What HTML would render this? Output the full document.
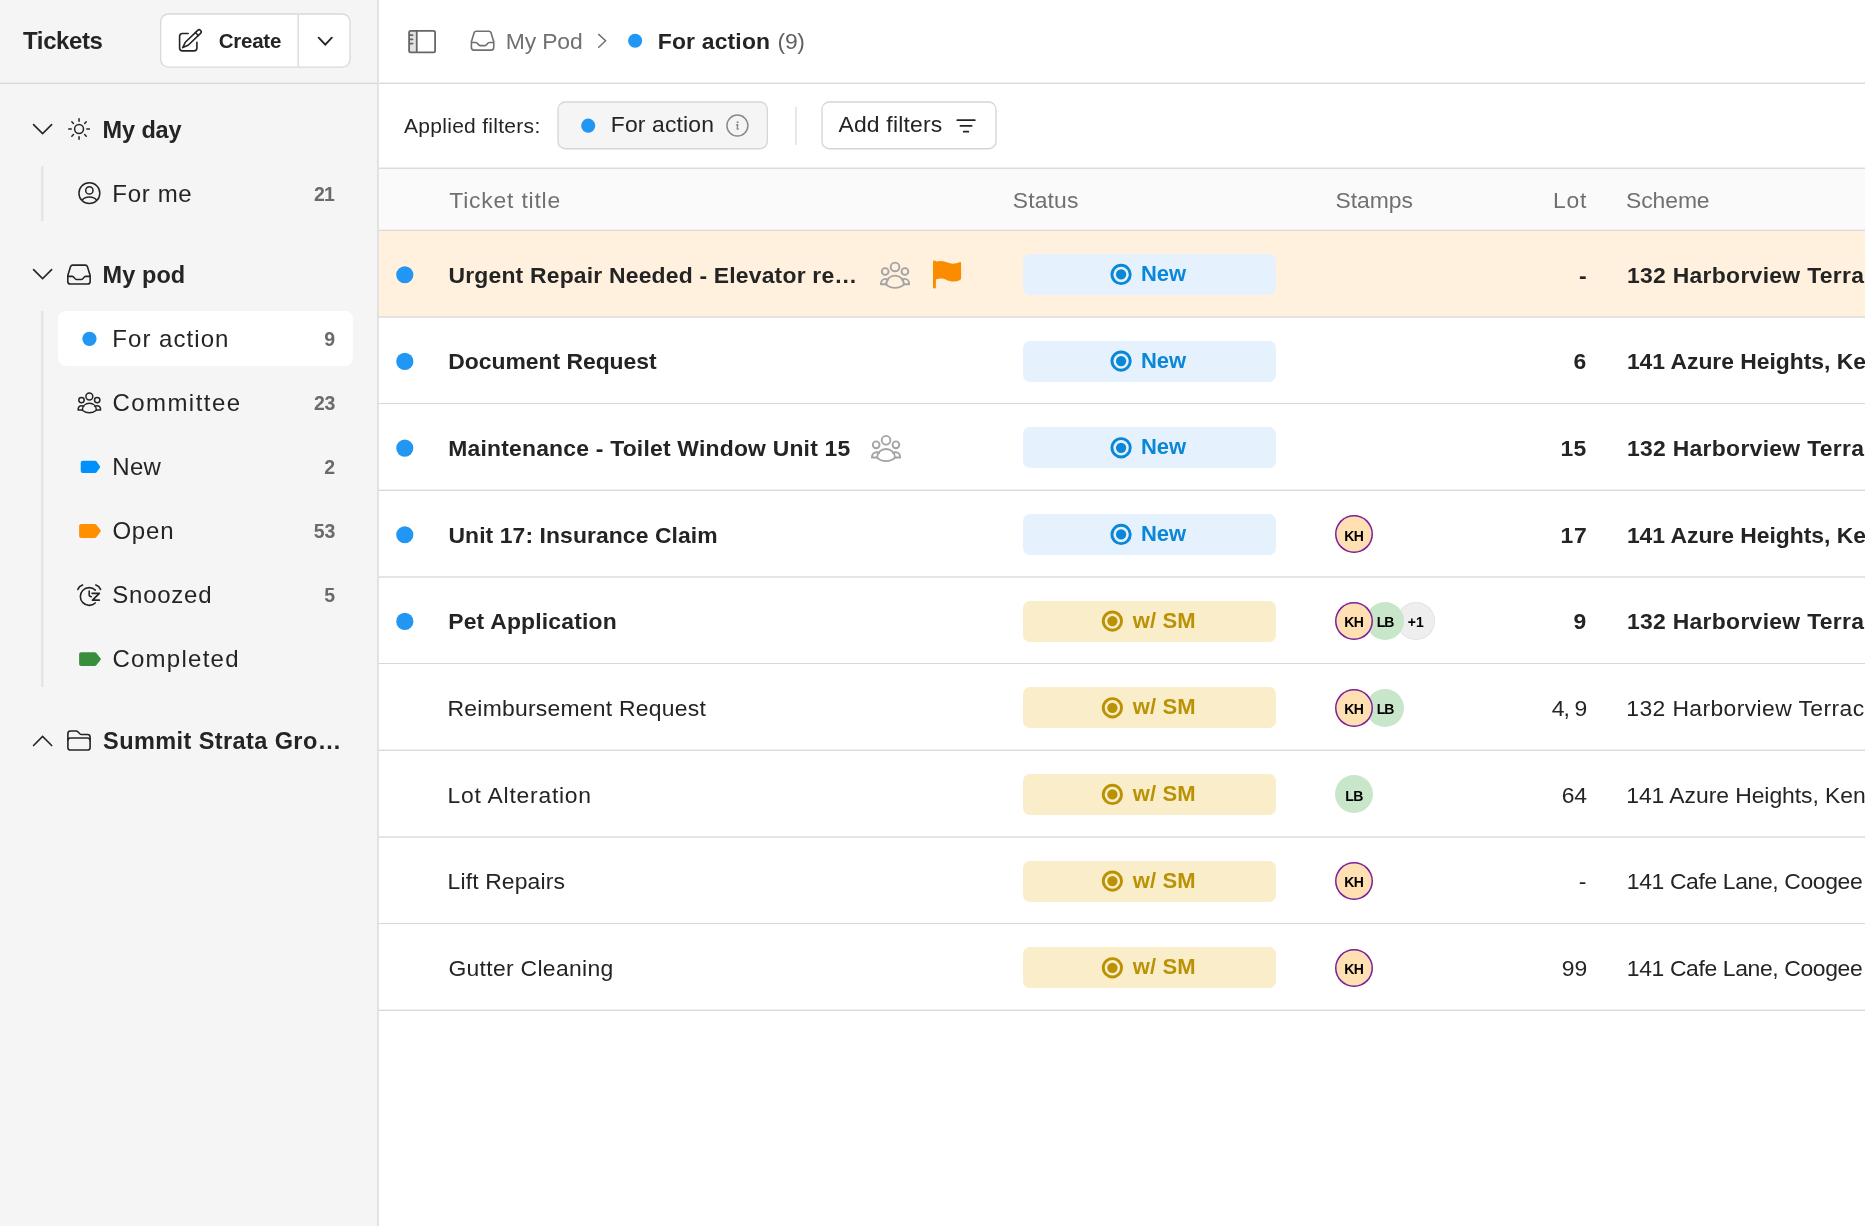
<!DOCTYPE html>
<html lang="en">
<head>
<meta charset="utf-8">
<title>Tickets - For action</title>
<style>
*{box-sizing:border-box;margin:0;padding:0}
html,body{width:1865px;height:1226px;overflow:hidden;background:#fff}
body{position:relative;font-family:"Liberation Sans",sans-serif;color:#242424}
aside,main,nav,header,div,svg,.t{position:absolute}
.t{white-space:nowrap;font-weight:400;display:block}
aside{left:0;top:0;width:377px;height:1226px;background:#f5f5f5}
aside:after{content:"";position:absolute;left:377px;top:0;width:2px;height:1226px;background:linear-gradient(90deg,#e0e0e0 50%,#e4e4e4 50%)}
main{left:0;top:0;width:1865px;height:1226px;overflow:hidden}
aside,main{will-change:transform}
.rail{background:linear-gradient(90deg,#e5e5e5 66.6%,#ececec 66.6%)}
.sel{background:#fff;border-radius:8px}
.thead{background:#fafafa}
.bdg{border-radius:7px}
.bdg.new{background:#e5f2fd}
.bdg.sm{background:#f9edca}
.av{border-radius:50%}
.av.kh{background:#ffe0b2;box-shadow:inset 0 0 0 1.5px #7b1fa2;z-index:3}
.av.lb{background:#c8e6c9;z-index:2}
.av.more{background:#eee;box-shadow:inset 0 0 0 1px #e4e4e4;z-index:1}
.ln{z-index:5}
</style>
</head>
<body>
<aside><div class="sbhead" style="left:0px;top:0px;width:377px;height:82px;"><h1 class="t" style="left:23.02px;top:29px;font-size:24px;line-height:24px;letter-spacing:-0.39px;font-weight:700;">Tickets</h1><div class="btn" style="left:160px;top:13px;width:191px;height:55px;"><svg class="ic bx" style="left:0px;top:0px" width="191" height="55" viewBox="160 13 191 55"><rect x="160.67" y="14" width="189.34" height="53.14" rx="7.83" fill="#fff" stroke="#d9d9d9" stroke-width="1.333"/></svg><div class="sep" style="left:137px;top:2px;width:2px;height:52px;background:linear-gradient(90deg,#ebebeb 50%,#dedede 50%)"></div><svg class="ic" style="left:16px;top:13px" width="29" height="28" viewBox="176 26 29 28"><g fill="none" stroke="#242424" stroke-width="1.6" stroke-linejoin="round" stroke-linecap="round"><path d="M188.2 33.55 H182.5 Q179.6 33.55 179.6 36.45 V47.95 Q179.6 50.85 182.5 50.85 H194 Q196.9 50.85 196.9 47.95 V42.3"/><g transform="translate(182.7 47.6) rotate(-43.8)"><path d="M0 0 L5.6 -2.05 H22.75 A2.05 2.05 0 0 1 22.75 2.05 H5.6 Z"/><path d="M19.6 -2.05 V2.05"/></g></g></svg><span class="t" style="left:58.70px;top:18px;font-size:20.5px;line-height:20.5px;letter-spacing:-0.24px;font-weight:700;">Create</span><svg class="ic" style="left:156px;top:22px" width="19" height="13" viewBox="316 35 19 13"><path d="M 318.67 37.66 L 325.25 44.55 L 331.83 37.66" fill="none" stroke="#242424" stroke-width="1.9" stroke-linecap="round" stroke-linejoin="miter"/></svg></div>
</div>
<div class="ln" style="left:0px;top:82px;width:377px;height:2px;background:linear-gradient(#ebebeb 50%,#d8d8d8 50%)"></div><nav class="nav" style="left:0px;top:84px;width:377px;height:1142px;"><svg class="ic" style="left:31px;top:38px" width="24" height="15" viewBox="31 122 24 15"><path d="M 33.56 124.56 L 42.6 133.52 L 51.64 124.56" fill="none" stroke="#242424" stroke-width="1.6" stroke-linecap="round" stroke-linejoin="miter"/></svg><svg class="ic" style="left:67px;top:33px" width="25" height="24" viewBox="67 117 25 24"><circle cx="79.05" cy="129" r="4.45" fill="none" stroke="#242424" stroke-width="1.5"/><path d="M86.85 129L89.35 129M84.64 134.59L86.26 136.21M79.05 136.8L79.05 139.3M73.46 134.59L71.84 136.21M71.25 129L68.75 129M73.46 123.41L71.84 121.79M79.05 121.2L79.05 118.7M84.64 123.41L86.26 121.79" stroke="#242424" stroke-width="1.5" stroke-linecap="round" fill="none"/></svg><span class="t sec" style="left:102.54px;top:35px;font-size:23.5px;line-height:23.5px;letter-spacing:-0.11px;font-weight:700;">My day</span><div class="rail" style="left:41px;top:82px;width:3px;height:55px;"></div><svg class="ic" style="left:77px;top:96px" width="25" height="26" viewBox="77 180 25 26"><g fill="none" stroke="#242424" stroke-width="1.5"><circle cx="89.38" cy="193.14" r="10.45"/><circle cx="89.38" cy="190.44" r="3.65"/><path d="M82.28 200.24 C84.78 196.04 93.98 196.04 96.48 200.24"/></g></svg><span class="t" style="left:112.31px;top:98px;font-size:24px;line-height:24px;letter-spacing:0.68px;">For me</span><span class="t cnt" style="left:313.95px;top:101px;font-size:19.5px;line-height:19.5px;letter-spacing:-0.88px;font-weight:700;color:#6a6a6a;">21</span><svg class="ic" style="left:31px;top:183px" width="24" height="15" viewBox="31 267 24 15"><path d="M 33.56 269.56 L 42.6 278.52 L 51.64 269.56" fill="none" stroke="#242424" stroke-width="1.6" stroke-linecap="round" stroke-linejoin="miter"/></svg><svg class="ic" style="left:65px;top:178px" width="28" height="25" viewBox="65 262 28 25"><g fill="none" stroke="#242424" stroke-width="1.6" stroke-linejoin="round"><path d="M72.7 265.1 H85.25 Q86.9 265.1 87.45 266.7 L90.15 275.6 V281.5 Q90.15 284.05 87.6 284.05 H70.35 Q67.8 284.05 67.8 281.5 V275.6 L70.5 266.7 Q71.05 265.1 72.7 265.1 Z"/><path d="M67.8 276.4 H72.2 C74.6 276.4 74.2 279.5 76.7 279.5 H81.25 C83.75 279.5 83.35 276.4 85.75 276.4 H90.15"/></g></svg><span class="t sec" style="left:102.54px;top:180px;font-size:23.5px;line-height:23.5px;letter-spacing:0.08px;font-weight:700;">My pod</span><div class="rail" style="left:41px;top:227px;width:3px;height:376px;"></div><div class="sel" style="left:58.2px;top:226.7px;width:294.6px;height:55.5px;"></div><svg class="ic dot" style="left:81px;top:246px" width="17" height="17" viewBox="81 330 17 17"><circle cx="89.45" cy="338.85" r="7.15" fill="#2196f3"/></svg><span class="t" style="left:112.31px;top:243px;font-size:24px;line-height:24px;letter-spacing:1.04px;">For action</span><span class="t cnt" style="left:324.20px;top:246px;font-size:19.5px;line-height:19.5px;font-weight:700;color:#6a6a6a;">9</span><svg class="ic" style="left:75px;top:306px" width="29" height="26" viewBox="75 390 29 26"><g fill="none" stroke="#242424" stroke-width="1.5" stroke-linejoin="round" stroke-linecap="round"><circle cx="89.35" cy="396.55" r="3.45"/><circle cx="81.5" cy="400.1" r="2.7"/><circle cx="97.2" cy="400.1" r="2.7"/><path d="M82.3 410.25 C82.3 405.95 85.4 403.35 89.35 403.35 S96.4 405.95 96.4 410.25 C94.5 411.95 92 412.75 89.35 412.75 S84.2 411.95 82.3 410.25 Z"/><path d="M82.5 409.95 H78.1 C78.1 407.55 79.7 405.85 81.7 405.85 C82.5 405.85 83.2 406.05 83.8 406.45"/><path d="M96.2 409.95 H100.6 C100.6 407.55 99 405.85 97 405.85 C96.2 405.85 95.5 406.05 94.9 406.45"/></g></svg><span class="t" style="left:112.42px;top:307px;font-size:24px;line-height:24px;letter-spacing:1.45px;">Committee</span><span class="t cnt" style="left:313.95px;top:310px;font-size:19.5px;line-height:19.5px;letter-spacing:-0.39px;font-weight:700;color:#6a6a6a;">23</span><svg class="ic" style="left:79px;top:375px" width="23" height="15" viewBox="79 459 23 15"><path d="M82.73 460.87 H95.1 Q96 460.87 96.6 461.57 L99.8 466.01 Q100.5 466.91 99.8 467.81 L96.6 472.25 Q96 472.95 95.1 472.95 H82.73 Q80.73 472.95 80.73 470.95 V462.87 Q80.73 460.87 82.73 460.87 Z" fill="#0091ff"/></svg><span class="t" style="left:112.31px;top:371px;font-size:24px;line-height:24px;letter-spacing:0.26px;">New</span><span class="t cnt" style="left:324.35px;top:374px;font-size:19.5px;line-height:19.5px;font-weight:700;color:#6a6a6a;">2</span><svg class="ic" style="left:78px;top:439px" width="24" height="16" viewBox="78 523 24 16"><path d="M81.1 524.05 H94.8 Q95.7 524.05 96.3 524.75 L100.46 530.07 Q101.16 530.97 100.46 531.87 L96.3 537.2 Q95.7 537.9 94.8 537.9 H81.1 Q79.1 537.9 79.1 535.9 V526.05 Q79.1 524.05 81.1 524.05 Z" fill="#ff8f00"/></svg><span class="t" style="left:112.42px;top:435px;font-size:24px;line-height:24px;letter-spacing:0.80px;">Open</span><span class="t cnt" style="left:313.84px;top:438px;font-size:19.5px;line-height:19.5px;letter-spacing:-0.29px;font-weight:700;color:#6a6a6a;">53</span><svg class="ic" style="left:75px;top:499px" width="28" height="25" viewBox="75 583 28 25"><g fill="none" stroke="#242424" stroke-width="1.6" stroke-linecap="round"><path d="M95.24 602.97 A8.85 8.85 0 1 1 95.35 590.13"/><path d="M89.2 591.1 V595.1 Q89.2 596.7 91.4 596.7"/><path d="M92.1 593.3 H99.3 L92.5 600.1 H99.3" stroke-width="1.8" stroke-linejoin="round"/><path d="M77.84 589.4 A7.5 7.5 0 0 1 82.5 584.9"/><path d="M95.9 584.9 A7.5 7.5 0 0 1 100.56 589.4"/></g></svg><span class="t" style="left:112.28px;top:499px;font-size:24px;line-height:24px;letter-spacing:0.76px;">Snoozed</span><span class="t cnt" style="left:324.20px;top:502px;font-size:19.5px;line-height:19.5px;font-weight:700;color:#6a6a6a;">5</span><svg class="ic" style="left:78px;top:567px" width="24" height="16" viewBox="78 651 24 16"><path d="M81.1 652.3 H94.8 Q95.7 652.3 96.3 653 L100.46 658.25 Q101.16 659.15 100.46 660.05 L96.3 665.3 Q95.7 666 94.8 666 H81.1 Q79.1 666 79.1 664 V654.3 Q79.1 652.3 81.1 652.3 Z" fill="#388e3c"/></svg><span class="t" style="left:112.42px;top:563px;font-size:24px;line-height:24px;letter-spacing:1.26px;">Completed</span><svg class="ic" style="left:31px;top:649px" width="24" height="16" viewBox="31 733 24 16"><path d="M 33.56 745.54 L 42.6 736.48 L 51.64 745.54" fill="none" stroke="#242424" stroke-width="1.6" stroke-linecap="round" stroke-linejoin="miter"/></svg><svg class="ic" style="left:65px;top:644px" width="28" height="25" viewBox="65 728 28 25"><g fill="none" stroke="#242424" stroke-width="1.6" stroke-linejoin="round"><path d="M67.9 747.4 V733.6 Q67.9 731 70.5 731 H76.2 Q77.1 731 77.8 731.7 L80.1 734 Q80.7 734.5 81.5 734.5 H87.5 Q90.1 734.5 90.1 737.1 V747.4 Q90.1 750.05 87.5 750.05 H70.5 Q67.9 750.05 67.9 747.4 Z"/><path d="M67.9 740.4 Q67.9 738 70.4 738 H87.6 Q90.1 738 90.1 740.4"/></g></svg><span class="t sec" style="left:103.07px;top:646px;font-size:23.5px;line-height:23.5px;letter-spacing:0.41px;font-weight:700;">Summit Strata Gro…</span></nav>
</aside>
<main><header class="crumbs" style="left:379px;top:0px;width:1486px;height:82px;"><svg class="ic" style="left:27px;top:27px" width="32" height="29" viewBox="406 27 32 29"><g fill="none" stroke="#666" stroke-width="1.8"><rect x="409.1" y="30.8" width="7.65" height="21.5" fill="#e2e2e2" stroke="none"/><rect x="409.1" y="30.8" width="26" height="21.5" rx="1.6"/><path d="M416.75 30.8 V52.3"/><path d="M409.8 35.1 H412.6 M409.8 39.35 H412.6 M409.8 43.6 H412.6" stroke-width="1.7" stroke-linecap="round"/></g></svg><svg class="ic" style="left:89px;top:28px" width="29" height="25" viewBox="468 28 29 25"><g fill="none" stroke="#707070" stroke-width="1.6" stroke-linejoin="round"><path d="M476.3 31.2 H488.85 Q490.5 31.2 491.05 32.8 L493.75 41.7 V47.6 Q493.75 50.15 491.2 50.15 H473.95 Q471.4 50.15 471.4 47.6 V41.7 L474.1 32.8 Q474.65 31.2 476.3 31.2 Z"/><path d="M471.4 42.5 H475.8 C478.2 42.5 477.8 45.6 480.3 45.6 H484.85 C487.35 45.6 486.95 42.5 489.35 42.5 H493.75"/></g></svg><span class="t" style="left:126.70px;top:30px;font-size:22.9px;line-height:22.9px;letter-spacing:-0.12px;color:#707070;">My Pod</span><svg class="ic" style="left:217px;top:31px" width="13" height="19" viewBox="596 31 13 19"><path d="M 598.73 34.42 L 605.57 40.8 L 598.73 47.18" fill="none" stroke="#707070" stroke-width="1.5" stroke-linecap="round" stroke-linejoin="miter"/></svg><svg class="ic dot" style="left:248px;top:32px" width="17" height="17" viewBox="627 32 17 17"><circle cx="635.15" cy="40.8" r="7.05" fill="#2196f3"/></svg><span class="t" style="left:278.77px;top:30px;font-size:22.9px;line-height:22.9px;letter-spacing:0.18px;font-weight:700;">For action</span><span class="t" style="left:398.58px;top:30px;font-size:22.9px;line-height:22.9px;letter-spacing:-0.30px;color:#616161;">(9)</span></header>
<div class="ln" style="left:379px;top:82px;width:1486px;height:2px;background:linear-gradient(#eeeeee 50%,#dcdcdc 50%)"></div><div class="filters" style="left:379px;top:84px;width:1486px;height:83px;"><span class="t" style="left:25.01px;top:31px;font-size:21px;line-height:21px;letter-spacing:0.29px;">Applied filters:</span><div class="chip" style="left:178px;top:17px;width:211px;height:49px;"><svg class="ic bx" style="left:0px;top:0px" width="211" height="49" viewBox="557 101 211 49"><rect x="558" y="102" width="209.34" height="46.74" rx="7.33" fill="#f5f5f5" stroke="#d6d6d6" stroke-width="1.333"/></svg><svg class="ic dot" style="left:23px;top:16px" width="17" height="17" viewBox="580 117 17 17"><circle cx="588.2" cy="125.65" r="7.05" fill="#2196f3"/></svg><span class="t" style="left:53.81px;top:12px;font-size:22.9px;line-height:22.9px;letter-spacing:0.15px;">For action</span><svg class="ic" style="left:167px;top:12px" width="26" height="26" viewBox="724 113 26 26"><circle cx="737.4" cy="125.6" r="10.5" fill="none" stroke="#8a8a8a" stroke-width="1.5"/><circle cx="737.6" cy="122.3" r="1.05" fill="#8a8a8a"/><path d="M736.5 125 L737.8 124.7 L737.1 129.2 L738.5 128.9" fill="none" stroke="#8a8a8a" stroke-width="1.3" stroke-linecap="round" stroke-linejoin="round"/></svg></div>
<div class="sep" style="left:416px;top:23px;width:2px;height:37.5px;background:linear-gradient(90deg,#e4e4e4 50%,#ececec 50%)"></div><div class="addf" style="left:442px;top:17px;width:176px;height:49px;"><svg class="ic bx" style="left:0px;top:0px" width="176" height="49" viewBox="821 101 176 49"><rect x="822" y="102" width="174.01" height="46.74" rx="7.33" fill="#fff" stroke="#d9d2dd" stroke-width="1.333"/></svg><span class="t" style="left:17.49px;top:12px;font-size:22.9px;line-height:22.9px;letter-spacing:0.19px;">Add filters</span><svg class="ic" style="left:133px;top:16px" width="24" height="18" viewBox="954 117 24 18"><path d="M957.25 120.15 H974.85 M960.45 125.9 H971.65 M963.75 131.65 H968.35" fill="none" stroke="#242424" stroke-width="1.7" stroke-linecap="round"/></svg></div>
</div>
<div class="ln" style="left:379px;top:167px;width:1486px;height:2px;background:linear-gradient(#eeeeee 50%,#dcdcdc 50%)"></div><div class="thead" style="left:379px;top:169px;width:1486px;height:61px;"><span class="t th" style="left:70.31px;top:20px;font-size:22.9px;line-height:22.9px;letter-spacing:0.79px;color:#707070;">Ticket title</span><span class="t th" style="left:633.73px;top:20px;font-size:22.9px;line-height:22.9px;letter-spacing:0.16px;color:#707070;">Status</span><span class="t th" style="left:956.44px;top:20px;font-size:22.9px;line-height:22.9px;letter-spacing:-0.01px;color:#707070;">Stamps</span><span class="t th" style="left:1174px;top:20px;font-size:22.9px;line-height:22.9px;letter-spacing:0.83px;color:#707070;">Lot</span><span class="t th" style="left:1247.08px;top:20px;font-size:22.9px;line-height:22.9px;letter-spacing:-0.09px;color:#707070;">Scheme</span></div>
<div class="ln" style="left:379px;top:229px;width:1486px;height:2px;background:linear-gradient(#efefef 50%,#dcdcdc 50%)"></div><div class="row" style="left:379px;top:231px;width:1486px;height:87px;background:#fff1de;"><svg class="ic dot" style="left:16px;top:34px" width="20" height="20" viewBox="395 265 20 20"><circle cx="404.8" cy="274.75" r="8.6" fill="#2196f3"/></svg><span class="t ttl" style="left:69.46px;top:33px;font-size:22.9px;line-height:22.9px;letter-spacing:0.20px;font-weight:700;">Urgent Repair Needed - Elevator re…</span><svg class="ic" style="left:498px;top:28px" width="36" height="31" viewBox="877 259 36 31"><g fill="none" stroke="#a3a3a3" stroke-width="1.85" stroke-linejoin="round" stroke-linecap="round"><circle cx="895.05" cy="266.92" r="4.34"/><circle cx="885.18" cy="271.5" r="3.39"/><circle cx="904.91" cy="271.5" r="3.39"/><path d="M886.18 284.59 C886.18 279.04 890.08 275.69 895.05 275.69 S903.91 279.04 903.91 284.59 C901.52 286.78 898.38 287.82 895.05 287.82 S888.57 286.78 886.18 284.59 Z"/><path d="M886.44 284.2 H880.91 C880.91 281.11 882.92 278.92 885.43 278.92 C886.44 278.92 887.32 279.17 888.07 279.69"/><path d="M903.66 284.2 H909.19 C909.19 281.11 907.18 278.92 904.66 278.92 C903.66 278.92 902.78 279.17 902.02 279.69"/></g></svg><svg class="ic" style="left:553px;top:28px" width="31" height="31" viewBox="932 259 31 31"><path d="M933 261.6 Q933 260.3 934.4 260.4 Q935.6 260.5 936 261.5 C939 260.6 942.5 260.6 946 262.1 S954 264.6 959.3 262.3 Q961.1 261.6 961.1 263.4 V278.2 Q961.1 279.4 960 279.9 C955 282.3 950.5 281.6 946.5 279.9 S939.5 278.3 935.9 279.4 V287.2 Q935.9 288.6 934.45 288.6 T933 287.2 Z" fill="#fb8c00"/></svg><div class="bdg new" style="left:644px;top:23px;width:253px;height:41px;"><svg class="ic" style="left:86px;top:8px" width="24" height="25" viewBox="1109 262 24 25"><circle cx="1121.1" cy="274.45" r="9.15" fill="none" stroke="#0b87d8" stroke-width="2.9"/><circle cx="1121.1" cy="274.45" r="5.15" fill="#0b87d8"/></svg><span class="t" style="left:117.95px;top:9px;font-size:22px;line-height:22px;letter-spacing:0.02px;font-weight:700;color:#0b87d8;">New</span></div>
<span class="t lot" style="left:1199.97px;top:33px;font-size:22.9px;line-height:22.9px;font-weight:700;">-</span><span class="t sch" style="left:1247.91px;top:33px;font-size:22.9px;line-height:22.9px;letter-spacing:0.31px;font-weight:700;">132 Harborview Terrace</span></div>
<div class="row" style="left:379px;top:318px;width:1486px;height:87px;"><svg class="ic dot" style="left:16px;top:33px" width="20" height="21" viewBox="395 351 20 21"><circle cx="404.8" cy="361.42" r="8.6" fill="#2196f3"/></svg><span class="t ttl" style="left:69.22px;top:32px;font-size:22.9px;line-height:22.9px;letter-spacing:-0.01px;font-weight:700;">Document Request</span><div class="bdg new" style="left:644px;top:23px;width:253px;height:41px;"><svg class="ic" style="left:86px;top:8px" width="24" height="24" viewBox="1109 349 24 24"><circle cx="1121.1" cy="361.12" r="9.15" fill="none" stroke="#0b87d8" stroke-width="2.9"/><circle cx="1121.1" cy="361.12" r="5.15" fill="#0b87d8"/></svg><span class="t" style="left:117.95px;top:9px;font-size:22px;line-height:22px;letter-spacing:0.02px;font-weight:700;color:#0b87d8;">New</span></div>
<span class="t lot" style="left:1194.46px;top:32px;font-size:22.9px;line-height:22.9px;font-weight:700;">6</span><span class="t sch" style="left:1247.91px;top:32px;font-size:22.9px;line-height:22.9px;letter-spacing:-0.03px;font-weight:700;">141 Azure Heights, Kensington</span></div>
<div class="row" style="left:379px;top:405px;width:1486px;height:86px;"><svg class="ic dot" style="left:16px;top:33px" width="20" height="20" viewBox="395 438 20 20"><circle cx="404.8" cy="448.08" r="8.6" fill="#2196f3"/></svg><span class="t ttl" style="left:69.22px;top:32px;font-size:22.9px;line-height:22.9px;letter-spacing:0.21px;font-weight:700;">Maintenance - Toilet Window Unit 15</span><svg class="ic" style="left:489px;top:27px" width="36" height="32" viewBox="868 432 36 32"><g fill="none" stroke="#a3a3a3" stroke-width="1.85" stroke-linejoin="round" stroke-linecap="round"><circle cx="886.05" cy="440.25" r="4.34"/><circle cx="876.18" cy="444.83" r="3.39"/><circle cx="895.91" cy="444.83" r="3.39"/><path d="M877.18 457.93 C877.18 452.38 881.08 449.02 886.05 449.02 S894.91 452.38 894.91 457.93 C892.52 460.12 889.38 461.15 886.05 461.15 S879.57 460.12 877.18 457.93 Z"/><path d="M877.44 457.54 H871.91 C871.91 454.44 873.92 452.25 876.43 452.25 C877.44 452.25 878.32 452.51 879.07 453.02"/><path d="M894.66 457.54 H900.19 C900.19 454.44 898.18 452.25 895.66 452.25 C894.66 452.25 893.78 452.51 893.02 453.02"/></g></svg><div class="bdg new" style="left:644px;top:22px;width:253px;height:41px;"><svg class="ic" style="left:86px;top:9px" width="24" height="24" viewBox="1109 436 24 24"><circle cx="1121.1" cy="447.78" r="9.15" fill="none" stroke="#0b87d8" stroke-width="2.9"/><circle cx="1121.1" cy="447.78" r="5.15" fill="#0b87d8"/></svg><span class="t" style="left:117.95px;top:9px;font-size:22px;line-height:22px;letter-spacing:0.02px;font-weight:700;color:#0b87d8;">New</span></div>
<span class="t lot" style="left:1181.61px;top:32px;font-size:22.9px;line-height:22.9px;letter-spacing:0.17px;font-weight:700;">15</span><span class="t sch" style="left:1247.91px;top:32px;font-size:22.9px;line-height:22.9px;letter-spacing:0.31px;font-weight:700;">132 Harborview Terrace</span></div>
<div class="row" style="left:379px;top:491px;width:1486px;height:87px;"><svg class="ic dot" style="left:16px;top:34px" width="20" height="20" viewBox="395 525 20 20"><circle cx="404.8" cy="534.75" r="8.6" fill="#2196f3"/></svg><span class="t ttl" style="left:69.46px;top:33px;font-size:22.9px;line-height:22.9px;letter-spacing:0.09px;font-weight:700;">Unit 17: Insurance Claim</span><div class="bdg new" style="left:644px;top:23px;width:253px;height:41px;"><svg class="ic" style="left:86px;top:8px" width="24" height="25" viewBox="1109 522 24 25"><circle cx="1121.1" cy="534.45" r="9.15" fill="none" stroke="#0b87d8" stroke-width="2.9"/><circle cx="1121.1" cy="534.45" r="5.15" fill="#0b87d8"/></svg><span class="t" style="left:117.95px;top:9px;font-size:22px;line-height:22px;letter-spacing:0.02px;font-weight:700;color:#0b87d8;">New</span></div>
<div class="av kh" style="left:956px;top:24px;width:38px;height:38px;"><span class="t avt" style="left:9.34px;top:14px;font-size:14px;line-height:14px;letter-spacing:-0.58px;font-weight:700;color:#000;">KH</span></div>
<span class="t lot" style="left:1181.61px;top:33px;font-size:22.9px;line-height:22.9px;letter-spacing:0.64px;font-weight:700;">17</span><span class="t sch" style="left:1247.91px;top:33px;font-size:22.9px;line-height:22.9px;letter-spacing:-0.03px;font-weight:700;">141 Azure Heights, Kensington</span></div>
<div class="row" style="left:379px;top:578px;width:1486px;height:87px;"><svg class="ic dot" style="left:16px;top:33px" width="20" height="21" viewBox="395 611 20 21"><circle cx="404.8" cy="621.42" r="8.6" fill="#2196f3"/></svg><span class="t ttl" style="left:69.22px;top:32px;font-size:22.9px;line-height:22.9px;letter-spacing:0.20px;font-weight:700;">Pet Application</span><div class="bdg sm" style="left:644px;top:23px;width:253px;height:41px;"><svg class="ic" style="left:77px;top:8px" width="25" height="24" viewBox="1100 609 25 24"><circle cx="1112.4" cy="621.12" r="9.15" fill="none" stroke="#bb9205" stroke-width="2.9"/><circle cx="1112.4" cy="621.12" r="5.15" fill="#bb9205"/></svg><span class="t" style="left:109.83px;top:9px;font-size:22px;line-height:22px;letter-spacing:0.10px;font-weight:700;color:#bb9205;">w/ SM</span></div>
<div class="av kh" style="left:956px;top:24px;width:38px;height:38px;"><span class="t avt" style="left:9.34px;top:13px;font-size:14px;line-height:14px;letter-spacing:-0.58px;font-weight:700;color:#000;">KH</span></div>
<div class="av lb" style="left:987px;top:24px;width:38px;height:38px;"><span class="t avt" style="left:10.66px;top:13px;font-size:14px;line-height:14px;letter-spacing:-0.91px;font-weight:700;color:#000;">LB</span></div>
<div class="av more" style="left:1018px;top:24px;width:38px;height:38px;"><span class="t avt" style="left:10.77px;top:13px;font-size:14px;line-height:14px;letter-spacing:0.01px;font-weight:700;color:#000;">+1</span></div>
<span class="t lot" style="left:1194.55px;top:32px;font-size:22.9px;line-height:22.9px;font-weight:700;">9</span><span class="t sch" style="left:1247.91px;top:32px;font-size:22.9px;line-height:22.9px;letter-spacing:0.31px;font-weight:700;">132 Harborview Terrace</span></div>
<div class="row" style="left:379px;top:665px;width:1486px;height:86px;"><span class="t ttl" style="left:68.58px;top:32px;font-size:22.9px;line-height:22.9px;letter-spacing:0.25px;">Reimbursement Request</span><div class="bdg sm" style="left:644px;top:22px;width:253px;height:41px;"><svg class="ic" style="left:77px;top:9px" width="25" height="24" viewBox="1100 696 25 24"><circle cx="1112.4" cy="707.79" r="9.15" fill="none" stroke="#bb9205" stroke-width="2.9"/><circle cx="1112.4" cy="707.79" r="5.15" fill="#bb9205"/></svg><span class="t" style="left:109.83px;top:9px;font-size:22px;line-height:22px;letter-spacing:0.10px;font-weight:700;color:#bb9205;">w/ SM</span></div>
<div class="av kh" style="left:956px;top:24px;width:38px;height:38px;"><span class="t avt" style="left:9.34px;top:13px;font-size:14px;line-height:14px;letter-spacing:-0.58px;font-weight:700;color:#000;">KH</span></div>
<div class="av lb" style="left:987px;top:24px;width:38px;height:38px;"><span class="t avt" style="left:10.66px;top:13px;font-size:14px;line-height:14px;letter-spacing:-0.91px;font-weight:700;color:#000;">LB</span></div>
<span class="t lot" style="left:1172.77px;top:32px;font-size:22.9px;line-height:22.9px;letter-spacing:-0.88px;">4, 9</span><span class="t sch" style="left:1247.26px;top:32px;font-size:22.9px;line-height:22.9px;letter-spacing:0.40px;">132 Harborview Terrace</span></div>
<div class="row" style="left:379px;top:751px;width:1486px;height:87px;"><span class="t ttl" style="left:68.58px;top:33px;font-size:22.9px;line-height:22.9px;letter-spacing:0.76px;">Lot Alteration</span><div class="bdg sm" style="left:644px;top:23px;width:253px;height:41px;"><svg class="ic" style="left:77px;top:8px" width="25" height="25" viewBox="1100 782 25 25"><circle cx="1112.4" cy="794.45" r="9.15" fill="none" stroke="#bb9205" stroke-width="2.9"/><circle cx="1112.4" cy="794.45" r="5.15" fill="#bb9205"/></svg><span class="t" style="left:109.83px;top:9px;font-size:22px;line-height:22px;letter-spacing:0.10px;font-weight:700;color:#bb9205;">w/ SM</span></div>
<div class="av lb" style="left:956px;top:24px;width:38px;height:38px;"><span class="t avt" style="left:10.33px;top:14px;font-size:14px;line-height:14px;letter-spacing:-0.63px;font-weight:700;color:#000;">LB</span></div>
<span class="t lot" style="left:1182.72px;top:33px;font-size:22.9px;line-height:22.9px;letter-spacing:-0.30px;">64</span><span class="t sch" style="left:1247.26px;top:33px;font-size:22.9px;line-height:22.9px;letter-spacing:-0.05px;">141 Azure Heights, Kensington</span></div>
<div class="row" style="left:379px;top:838px;width:1486px;height:87px;"><span class="t ttl" style="left:68.58px;top:32px;font-size:22.9px;line-height:22.9px;letter-spacing:0.14px;">Lift Repairs</span><div class="bdg sm" style="left:644px;top:23px;width:253px;height:41px;"><svg class="ic" style="left:77px;top:8px" width="25" height="24" viewBox="1100 869 25 24"><circle cx="1112.4" cy="881.12" r="9.15" fill="none" stroke="#bb9205" stroke-width="2.9"/><circle cx="1112.4" cy="881.12" r="5.15" fill="#bb9205"/></svg><span class="t" style="left:109.83px;top:9px;font-size:22px;line-height:22px;letter-spacing:0.10px;font-weight:700;color:#bb9205;">w/ SM</span></div>
<div class="av kh" style="left:956px;top:24px;width:38px;height:38px;"><span class="t avt" style="left:9.34px;top:13px;font-size:14px;line-height:14px;letter-spacing:-0.58px;font-weight:700;color:#000;">KH</span></div>
<span class="t lot" style="left:1199.84px;top:32px;font-size:22.9px;line-height:22.9px;">-</span><span class="t sch" style="left:1247.77px;top:32px;font-size:22.9px;line-height:22.9px;letter-spacing:-0.36px;">141 Cafe Lane, Coogee</span></div>
<div class="row" style="left:379px;top:925px;width:1486px;height:86px;"><span class="t ttl" style="left:69.42px;top:32px;font-size:22.9px;line-height:22.9px;letter-spacing:0.32px;">Gutter Cleaning</span><div class="bdg sm" style="left:644px;top:22px;width:253px;height:41px;"><svg class="ic" style="left:77px;top:9px" width="25" height="24" viewBox="1100 956 25 24"><circle cx="1112.4" cy="967.79" r="9.15" fill="none" stroke="#bb9205" stroke-width="2.9"/><circle cx="1112.4" cy="967.79" r="5.15" fill="#bb9205"/></svg><span class="t" style="left:109.83px;top:9px;font-size:22px;line-height:22px;letter-spacing:0.10px;font-weight:700;color:#bb9205;">w/ SM</span></div>
<div class="av kh" style="left:956px;top:24px;width:38px;height:38px;"><span class="t avt" style="left:9.34px;top:13px;font-size:14px;line-height:14px;letter-spacing:-0.58px;font-weight:700;color:#000;">KH</span></div>
<span class="t lot" style="left:1182.84px;top:32px;font-size:22.9px;line-height:22.9px;letter-spacing:0.01px;">99</span><span class="t sch" style="left:1247.77px;top:32px;font-size:22.9px;line-height:22.9px;letter-spacing:-0.36px;">141 Cafe Lane, Coogee</span></div>
<div class="ln" style="left:379px;top:316px;width:1486px;height:2px;background:linear-gradient(#e5e0da 50%,#e5e5e5 50%)"></div><div class="ln" style="left:379px;top:402px;width:1486px;height:2px;background:linear-gradient(#ffffff 50%,#d8d8d8 50%)"></div><div class="ln" style="left:379px;top:489px;width:1486px;height:2px;background:linear-gradient(#f2f2f2 50%,#d8d8d8 50%)"></div><div class="ln" style="left:379px;top:576px;width:1486px;height:2px;background:linear-gradient(#e5e5e5 50%,#e5e5e5 50%)"></div><div class="ln" style="left:379px;top:662px;width:1486px;height:2px;background:linear-gradient(#ffffff 50%,#d8d8d8 50%)"></div><div class="ln" style="left:379px;top:749px;width:1486px;height:2px;background:linear-gradient(#f2f2f2 50%,#d8d8d8 50%)"></div><div class="ln" style="left:379px;top:836px;width:1486px;height:2px;background:linear-gradient(#e5e5e5 50%,#e5e5e5 50%)"></div><div class="ln" style="left:379px;top:922px;width:1486px;height:2px;background:linear-gradient(#ffffff 50%,#d8d8d8 50%)"></div><div class="ln" style="left:379px;top:1009px;width:1486px;height:2px;background:linear-gradient(#f2f2f2 50%,#d8d8d8 50%)"></div></main>
</body>
</html>
